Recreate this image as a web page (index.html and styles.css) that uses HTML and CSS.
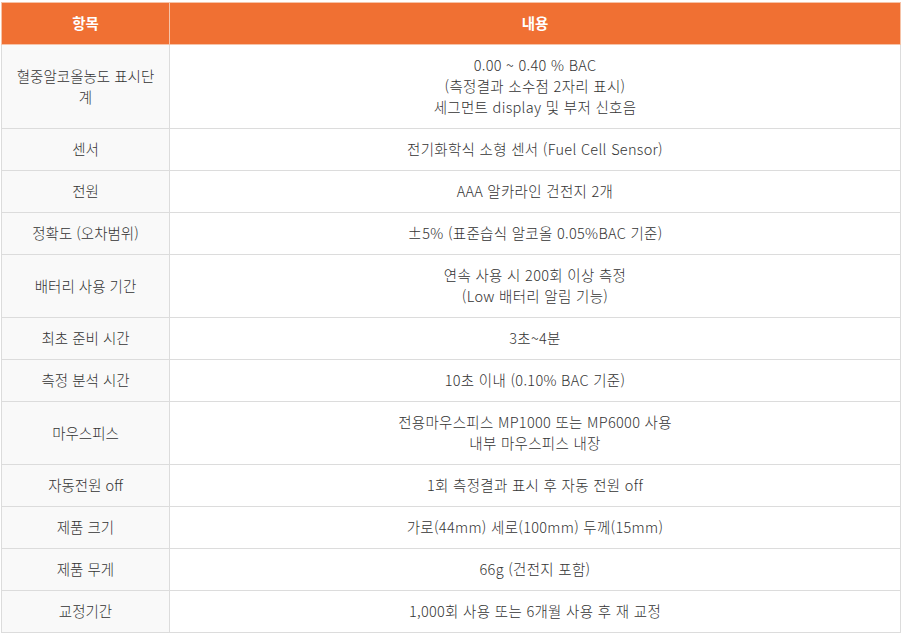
FILE: index.html
```html
<!DOCTYPE html>
<html lang="ko">
<head>
<meta charset="utf-8">
<title>제품 사양</title>
<link rel="stylesheet" href="styles.css">
</head>
<body>
<table class="spec">
  <colgroup><col class="c1"><col class="c2"></colgroup>
  <thead>
    <tr><th>항목</th><th>내용</th></tr>
  </thead>
  <tbody>
    <tr><td class="k">혈중알코올농도 표시단계</td><td>0.00 ~ 0.40 % BAC<br>(측정결과 소수점 2자리 표시)<br>세그먼트 display 및 부저 신호음</td></tr>
    <tr><td class="k">센서</td><td>전기화학식 소형 센서 (Fuel Cell Sensor)</td></tr>
    <tr><td class="k">전원</td><td>AAA 알카라인 건전지 2개</td></tr>
    <tr><td class="k">정확도 (오차범위)</td><td>±5% (표준습식 알코올 0.05%BAC 기준)</td></tr>
    <tr><td class="k">배터리 사용 기간</td><td>연속 사용 시 200회 이상 측정<br>(Low 배터리 알림 기능)</td></tr>
    <tr><td class="k">최초 준비 시간</td><td>3초~4분</td></tr>
    <tr><td class="k">측정 분석 시간</td><td>10초 이내 (0.10% BAC 기준)</td></tr>
    <tr><td class="k">마우스피스</td><td>전용마우스피스 MP1000 또는 MP6000 사용<br>내부 마우스피스 내장</td></tr>
    <tr><td class="k">자동전원 off</td><td>1회 측정결과 표시 후 자동 전원 off</td></tr>
    <tr><td class="k">제품 크기</td><td>가로(44mm) 세로(100mm) 두께(15mm)</td></tr>
    <tr><td class="k">제품 무게</td><td>66g (건전지 포함)</td></tr>
    <tr><td class="k">교정기간</td><td>1,000회 사용 또는 6개월 사용 후 재 교정</td></tr>
  </tbody>
</table>
</body>
</html>
```
FILE: styles.css
```css
html, body {
  margin: 0;
  padding: 0;
  background: #fff;
}
body {
  font-family: "Noto Sans CJK KR", "Noto Sans", sans-serif;
  font-size: 14.5px;
  color: #333;
}
.spec {
  margin: 2px 0 0 1px;
  width: 900px;
  border-collapse: collapse;
  table-layout: fixed;
}
.c1 { width: 168px; }
.spec th,
.spec td {
  border: 1px solid #dcdcdc;
  padding: 9px 12px 11px;
  line-height: 21px;
  text-align: center;
  vertical-align: middle;
  font-weight: 300;
}
.spec td:not(.k) {
  letter-spacing: 0.3px;
}
.spec th {
  background: #f07033;
  color: #fff;
  font-weight: bold;
  border-color: #f6c3a8;
}
.spec td.k {
  background: #f9f9f9;
}
```
